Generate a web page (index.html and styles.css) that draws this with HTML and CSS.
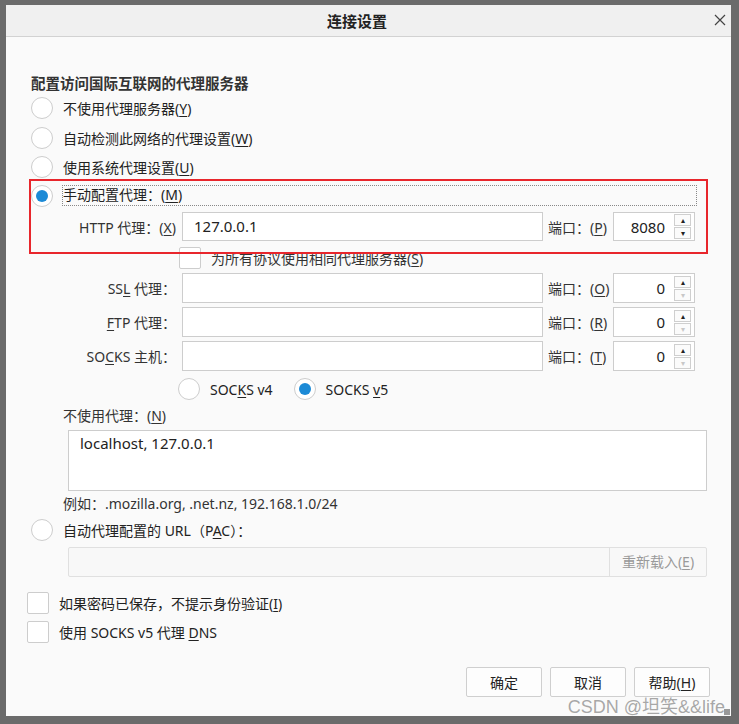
FILE: index.html
```html
<!DOCTYPE html>
<html lang="zh-CN">
<head>
    <meta charset="UTF-8">
    <title>连接设置</title>
    <link rel="stylesheet" href="styles.css">
</head>
<body>
    <div class="dialog">
        <div class="titlebar">
            <span class="title">连接设置</span>
            <span class="close">
                <svg width="12" height="12" viewBox="0 0 12 12"><path d="M1 1 L11 11 M11 1 L1 11" stroke="#444" stroke-width="1.2" fill="none"/></svg>
            </span>
        </div>

        <div class="content">
            <div class="heading">配置访问国际互联网的代理服务器</div>

            <div class="radio-row r1"><span class="radio"></span><span>不使用代理服务器(<u>Y</u>)</span></div>
            <div class="radio-row r2"><span class="radio"></span><span>自动检测此网络的代理设置(<u>W</u>)</span></div>
            <div class="radio-row r3"><span class="radio"></span><span>使用系统代理设置(<u>U</u>)</span></div>
            <div class="radio-row r3"><span class="radio checked"></span><span class="focused">手动配置代理：(<u>M</u>)</span></div>

            <div class="proxy-row http">
                <label class="proxy-label">HTTP 代理：(<u>X</u>)</label>
                <div class="field">127.0.0.1</div>
                <label class="port-label">端口：(<u>P</u>)</label>
                <div class="spinner">
                    <span class="spin-value">8080</span>
                    <span class="spin-btns"><span class="arrow">&#9652;</span><span class="arrow">&#9662;</span></span>
                </div>
            </div>

            <div class="same-row"><span class="checkbox"></span><span>为所有协议使用相同代理服务器(<u>S</u>)</span></div>

            <div class="proxy-row">
                <label class="proxy-label">SS<u>L</u> 代理：</label>
                <div class="field"></div>
                <label class="port-label">端口：(<u>O</u>)</label>
                <div class="spinner">
                    <span class="spin-value">0</span>
                    <span class="spin-btns"><span class="arrow">&#9652;</span><span class="arrow off">&#9662;</span></span>
                </div>
            </div>
            <div class="proxy-row">
                <label class="proxy-label"><u>F</u>TP 代理：</label>
                <div class="field"></div>
                <label class="port-label">端口：(<u>R</u>)</label>
                <div class="spinner">
                    <span class="spin-value">0</span>
                    <span class="spin-btns"><span class="arrow">&#9652;</span><span class="arrow off">&#9662;</span></span>
                </div>
            </div>
            <div class="proxy-row">
                <label class="proxy-label">SO<u>C</u>KS 主机：</label>
                <div class="field"></div>
                <label class="port-label">端口：(<u>T</u>)</label>
                <div class="spinner">
                    <span class="spin-value">0</span>
                    <span class="spin-btns"><span class="arrow">&#9652;</span><span class="arrow off">&#9662;</span></span>
                </div>
            </div>

            <div class="socks-row">
                <span class="radio"></span><span class="socks-text">SOC<u>K</u>S v4</span>
                <span class="radio checked"></span><span>SOCKS <u>v</u>5</span>
            </div>

            <div class="sub-label">不使用代理：(<u>N</u>)</div>
            <div class="textarea">localhost, 127.0.0.1</div>
            <div class="sub-label example">例如：.mozilla.org, .net.nz, 192.168.1.0/24</div>

            <div class="radio-row pac"><span class="radio"></span><span>自动代理配置的 URL（P<u>A</u>C）：</span></div>
            <div class="url-row">
                <div class="url-field"></div>
                <div class="reload">重新载入(<u>E</u>)</div>
            </div>

            <div class="check-row first"><span class="checkbox"></span><span>如果密码已保存，不提示身份验证(<u>I</u>)</span></div>
            <div class="check-row"><span class="checkbox"></span><span>使用 SOCKS v5 代理 <u>D</u>NS</span></div>

            <div class="buttons">
                <button class="btn">确定</button>
                <button class="btn">取消</button>
                <button class="btn">帮助(<u>H</u>)</button>
            </div>
        </div>

        <div class="highlight"></div>
        <div class="watermark">CSDN @坦笑&amp;&amp;life</div>
        <div class="grip"></div>
    </div>
</body>
</html>
```

FILE: styles.css
```css
/* Base */
* {
    margin: 0;
    padding: 0;
    box-sizing: border-box;
}

body {
    background: #6b6b6b;
    font-family: 'Noto Sans', 'Noto Sans CJK SC', sans-serif;
    font-size: 14px;
    color: #222;
    overflow: hidden;
}

u {
    text-underline-offset: 2px;
    text-decoration-thickness: 1px;
}

/* Dialog frame */
.dialog {
    position: relative;
    margin: 5px 8px 0 6px;
    height: 711px;
    background: #fafafa;
    display: flex;
    flex-direction: column;
}

.titlebar {
    height: 32px;
    background: #f0f0f0;
    border-bottom: 1px solid #d2d2d2;
    display: flex;
    align-items: center;
    justify-content: center;
    padding-right: 23px;
    position: relative;
}

.title {
    font-family: 'Noto Sans CJK SC', sans-serif;
    font-size: 15px;
    font-weight: bold;
    color: #222;
}

.close {
    position: absolute;
    right: 5px;
    top: 9px;
    line-height: 0;
}

.content {
    padding: 36px 24px 0 25px;
    display: flex;
    flex-direction: column;
}

.heading {
    height: 20px;
    line-height: 20px;
    font-family: 'Noto Sans CJK SC', sans-serif;
    font-size: 14.5px;
    font-weight: bold;
    color: #333;
}

/* Radios and checkboxes */
.radio-row {
    display: flex;
    align-items: center;
    gap: 10px;
    height: 29px;
}

.radio-row.r1 {
    height: 30px;
}

.radio {
    width: 22px;
    height: 22px;
    border: 1px solid #cdcdcd;
    border-radius: 50%;
    background: #fff;
    flex: none;
    display: flex;
    align-items: center;
    justify-content: center;
}

.radio.checked::after {
    content: '';
    width: 12px;
    height: 12px;
    border-radius: 50%;
    background: #1c8ad6;
}

.focused {
    flex: 1;
    height: 21px;
    line-height: 19px;
    outline: 1px dotted #888;
    outline-offset: -1px;
    margin-right: 10px;
    margin-left: -1px;
    padding-left: 1px;
}

.checkbox {
    width: 22px;
    height: 22px;
    border: 1px solid #cdcdcd;
    border-radius: 2px;
    background: #fff;
    flex: none;
}

/* Proxy fields */
.proxy-row {
    display: flex;
    align-items: center;
    height: 30px;
    margin-top: 4px;
}

.proxy-row.http {
    margin-top: 2px;
    height: 29px;
}

.proxy-label {
    width: 151px;
    text-align: right;
    color: #333;
    padding-right: 6px;
}

.field {
    width: 361px;
    height: 100%;
    background: #fff;
    border: 1px solid #cdcdcd;
    padding-left: 11px;
    line-height: 27px;
    font-size: 15px;
}

.port-label {
    width: 70px;
    padding-left: 5px;
    color: #333;
}

.spinner {
    width: 82px;
    height: 100%;
    background: #fff;
    border: 1px solid #cdcdcd;
    display: flex;
    align-items: center;
}

.spin-value {
    flex: 1;
    text-align: right;
    padding-right: 9px;
    font-size: 15px;
}

.spin-btns {
    width: 17px;
    height: 25px;
    margin-right: 3px;
    display: flex;
    flex-direction: column;
    gap: 1px;
}

.arrow {
    flex: 1;
    border: 1px solid #cfcfcf;
    background: #fbfbfb;
    font-size: 8px;
    line-height: 10px;
    text-align: center;
    color: #222;
}

.arrow.off {
    color: #c8c8c8;
}

.same-row {
    display: flex;
    align-items: center;
    gap: 10px;
    margin: 6px 0 0 148px;
    height: 22px;
    color: #333;
}

.socks-row {
    display: flex;
    align-items: center;
    height: 22px;
    margin: 7px 0 0 147px;
    gap: 10px;
}

.socks-text {
    margin-right: 11px;
}

.sub-label {
    margin: 7px 0 0 32px;
    height: 18px;
    line-height: 18px;
    color: #333;
}

.textarea {
    margin: 5px 0 0 37px;
    height: 61px;
    background: #fff;
    border: 1px solid #cdcdcd;
    padding: 2px 11px;
    font-size: 15px;
    line-height: 20px;
}

.sub-label.example {
    margin-top: 4px;
}

.radio-row.pac {
    margin-top: 5px;
    height: 24px;
}

.url-row {
    display: flex;
    margin: 5px 0 0 37px;
    height: 30px;
    border: 1px solid #e0e0e0;
    border-radius: 2px;
    background: #f8f8f8;
}

.url-field {
    flex: 1;
}

.reload {
    width: 97px;
    border-left: 1px solid #e0e0e0;
    color: #9a9a9a;
    text-align: center;
    line-height: 28px;
}

.check-row {
    display: flex;
    align-items: center;
    gap: 10px;
    height: 22px;
    margin: 7px 0 0 -4px;
}

.check-row.first {
    margin-top: 15px;
}

/* Buttons */
.buttons {
    display: flex;
    justify-content: flex-end;
    gap: 8px;
    margin-top: 24px;
    margin-right: -3px;
}

.btn {
    width: 76px;
    height: 30px;
    background: #fdfdfd;
    border: 1px solid #cfcfcf;
    border-radius: 2px;
    font-family: inherit;
    font-size: 14px;
    color: #222;
}

/* Overlays */
.highlight {
    position: absolute;
    left: 23px;
    top: 174px;
    width: 679px;
    height: 75px;
    border: 2px solid #e8262c;
    pointer-events: none;
}

.watermark {
    position: absolute;
    right: 6px;
    bottom: -2px;
    font-family: 'Liberation Sans', 'Noto Sans CJK SC', sans-serif;
    font-size: 18px;
    color: rgba(140, 140, 140, 0.75);
    pointer-events: none;
}

.grip {
    position: absolute;
    right: 1px;
    bottom: 1px;
    width: 6px;
    height: 6px;
    background: radial-gradient(circle, #999 0.8px, transparent 1px) 0 0 / 2px 2px;
}
```
